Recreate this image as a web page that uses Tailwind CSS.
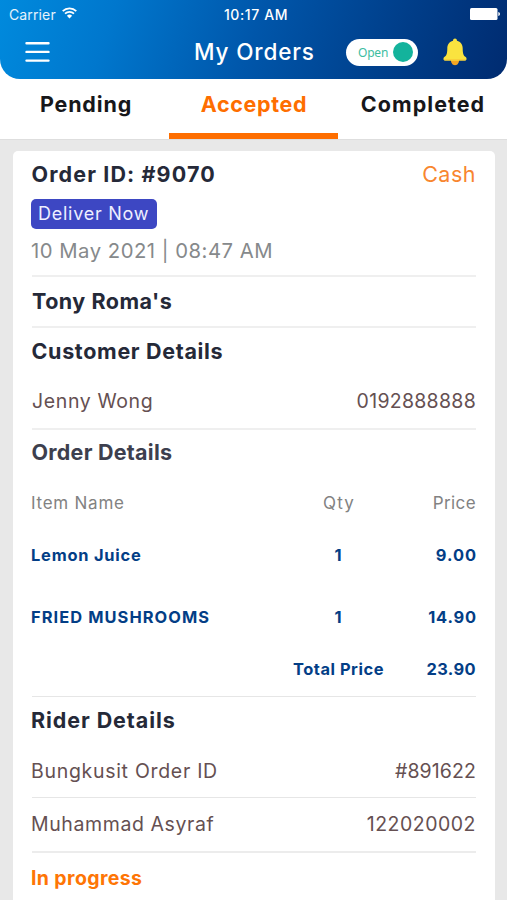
<!DOCTYPE html>
<html lang="en">
<head>
<meta charset="utf-8">
<title>My Orders</title>
<script src="https://cdn.jsdelivr.net/npm/@tailwindcss/browser@4"></script>
</head>
<body class="bg-white">
<div class="w-[507px] h-[900px] overflow-hidden flex flex-col bg-white font-['Inter','Liberation_Sans',sans-serif] whitespace-nowrap">
  <header class="h-[79px] shrink-0 rounded-b-[20px] bg-[linear-gradient(108deg,#008add_0%,#0077cd_22%,#0056aa_50%,#003f8b_76%,#002b70_100%)] text-white">
    <div class="h-7 grid grid-cols-3 items-center pl-[9px] pr-[7px]">
      <div class="flex items-center gap-[6px]">
        <span class="text-[14px] tracking-[0.13px] text-white/90">Carrier</span>
        <svg class="w-[15px] h-[12px] -mt-[2px]" viewBox="0 0 15 12" fill="none" stroke="#fff" stroke-width="1.7">
          <path d="M.7 4.2a9.6 9.6 0 0 1 13.6 0M3 6.7a6.4 6.4 0 0 1 9 0"/>
          <path d="M4.9 8.700a3.700 3.700 0 0 1 5.200 0L7.500 11.500z" fill="#fff" stroke="none"/>
        </svg>
      </div>
      <span class="text-[14px] font-medium tracking-[0.6px] text-center pl-[3px]">10:17 AM</span>
      <svg class="justify-self-end w-[30px] h-[12px] -mt-px" viewBox="0 0 30 12" fill="#fff"><rect width="27.5" height="12" rx="1.5"/><path d="M28.3 4c2.2.4 2.2 3.6 0 4z"/></svg>
    </div>
    <div class="h-12 flex items-center pl-[25px]">
      <svg class="w-[25px] h-[22px] -mt-px" viewBox="0 0 25 22" stroke="#fff" stroke-width="2.4" stroke-linecap="round"><path d="M1.5 2.2h22M1.5 10.9h22M1.5 19.6h22"/></svg>
      <h1 class="ml-[144px] w-[152px] text-[22.5px] font-medium tracking-[0.85px]">My Orders</h1>
      <div class="w-[72px] h-[27px] rounded-full bg-white flex items-center justify-between pl-[12px] pr-[5px]">
        <span class="font-['Noto_Sans','Open_Sans',sans-serif] text-[12px] text-[#3dbd9f] tracking-[-0.2px] mt-px">Open</span>
        <span class="size-5 rounded-full bg-[#14b39c]"></span>
      </div>
      <svg class="ml-[25px] w-6 h-[28px]" viewBox="0 0 24 28">
        <path d="M8 21h8c.4 3.4-1.200 6.200-4 6.200S7.600 24.400 8 21z" fill="#f5a623"/>
        <path d="M12 .6c1.100 0 1.900.8 2 2.200 3.600 1 5.700 3.800 5.700 7.700 0 5.200.9 7.200 3 8.600 1.500 1.100.9 3.400-1 3.400H2.300c-1.900 0-2.500-2.300-1-3.400 2.100-1.400 3-3.400 3-8.600 0-3.900 2.100-6.700 5.700-7.700.1-1.400.9-2.200 2-2.200z" fill="#fae33f"/>
        <path d="M.7 21c.2.900.8 1.500 1.600 1.500h19.400c.8 0 1.400-.6 1.600-1.500z" fill="#f9cf38"/>
      </svg>
    </div>
  </header>

  <nav class="h-[60px] shrink-0 grid grid-cols-3 text-[21.5px] font-bold text-[#17171a] text-center leading-[51px]">
    <div class="pl-[3px] tracking-[0.85px]">Pending</div>
    <div class="pl-px text-[#fe6e00] tracking-[0.65px] border-b-[6px] border-[#fe6e00]">Accepted</div>
    <div class="pl-px tracking-[1.05px]">Completed</div>
  </nav>

  <main class="flex-1 bg-[#e8e8e8] border-t border-[#dedede] pl-[13px] pt-[11px] pr-[12px]">
    <article class="h-[800px] bg-white rounded-t-[5px] px-[19px] text-[#252938]">
      <section class="h-[126px] border-b-2 border-[#efefef]">
        <div class="h-[47px] flex items-center justify-between">
          <h2 class="text-[21.5px] font-bold tracking-[1.12px] -ml-[0.5px]">Order ID: #9070</h2>
          <span class="text-[21.5px] text-[#f8862f] tracking-[0.5px]">Cash</span>
        </div>
        <div class="-ml-px mt-px w-[126px] h-[30px] rounded-[5px] bg-[#3d47c3] text-[#eeefff] text-[18px] tracking-[0.75px] leading-[29px] pl-[7px]">Deliver Now</div>
        <p class="mt-[7px] -ml-px text-[20.3px] leading-[30px] text-[#86898b] tracking-[0.5px]">10 May 2021 | 08:47 AM</p>
      </section>
      <section class="h-[51px] border-b-2 border-[#efefef] flex items-center">
        <h2 class="text-[21.5px] font-bold tracking-[0.5px]">Tony Roma's</h2>
      </section>
      <section class="h-[102px] border-b-2 border-[#efefef]">
        <h2 class="-ml-[0.5px] h-[46px] leading-[47px] text-[21.5px] font-bold tracking-[0.68px]">Customer Details</h2>
        <div class="h-[54px] pt-[2px] flex items-center justify-between text-[19.5px] text-[#655052]">
          <span class="tracking-[0.62px]">Jenny Wong</span><span class="tracking-[0.28px]">0192888888</span>
        </div>
      </section>
      <section class="h-[267px] border-b border-[#e6e6e6]">
        <h2 class="-ml-[0.5px] h-[46px] leading-[45px] text-[21.5px] font-bold tracking-[0.25px] text-[#3d3f4e]">Order Details</h2>
        <div class="h-[52px] pt-[3px] grid grid-cols-[280px_54px_110px] items-center text-[17px] text-[#828282]">
          <span class="-ml-px tracking-[0.75px]">Item Name</span><span class="text-center tracking-[1.2px]">Qty</span><span class="text-right tracking-[0.4px]">Price</span>
        </div>
        <div class="h-[54px] grid grid-cols-[280px_54px_110px] items-center text-[16.4px] font-bold text-[#033e86]">
          <span class="-ml-px tracking-[0.8px]">Lemon Juice</span><span class="text-center pr-[2px]">1</span><span class="text-right -mr-px tracking-[1px]">9.00</span>
        </div>
        <div class="h-[70px] grid grid-cols-[280px_54px_110px] items-center text-[16.4px] font-bold text-[#033e86]">
          <span class="-ml-px tracking-[1.08px]">FRIED MUSHROOMS</span><span class="text-center pr-[2px]">1</span><span class="text-right -mr-px tracking-[0.85px]">14.90</span>
        </div>
        <div class="h-[34px] flex justify-between items-center text-[16.4px] font-bold text-[#033e86] pl-[261px]">
          <span class="tracking-[0.55px]">Total Price</span><span class="tracking-[0.4px]">23.90</span>
        </div>
      </section>
      <section class="text-[19.5px] text-[#655052]">
        <h2 class="-ml-px h-[47px] leading-[47px] text-[21.5px] font-bold tracking-[0.92px] text-[#252938]">Rider Details</h2>
        <div class="h-[54px] pt-[2px] flex items-center justify-between border-b border-[#e6e6e6]">
          <span class="-ml-px tracking-[0.7px]">Bungkusit Order ID</span><span class="tracking-[0.1px]">#891622</span>
        </div>
        <div class="h-[55px] pt-px flex items-center justify-between border-b-2 border-[#ececec]">
          <span class="-ml-px tracking-[0.6px]">Muhammad Asyraf</span><span class="tracking-[0.5px]">122020002</span>
        </div>
        <p class="-ml-px leading-[50px] font-bold text-[#fe7505] tracking-[0.38px]">In progress</p>
      </section>
    </article>
  </main>
</div>
</body>
</html>
